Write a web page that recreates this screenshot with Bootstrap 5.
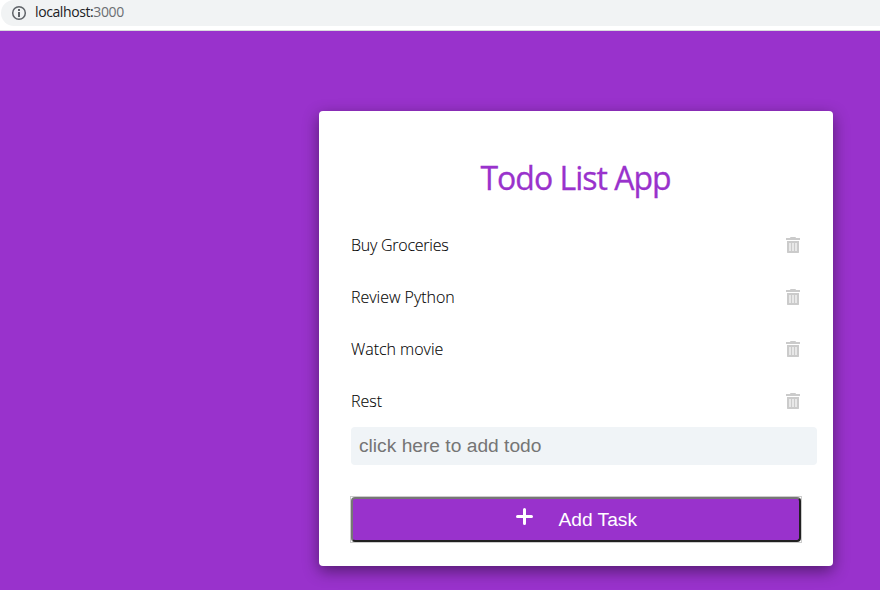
<!DOCTYPE html>
<html lang="en">
<head>
<meta charset="utf-8">
<title>Todo List App</title>
<link href="https://cdn.jsdelivr.net/npm/bootstrap@5.3.0/dist/css/bootstrap.min.css" rel="stylesheet">
<script src="https://cdn.jsdelivr.net/npm/bootstrap@5.3.0/dist/js/bootstrap.bundle.min.js" defer></script>
<style>
body{background:#9932cc;font-family:"Open Sans",sans-serif;height:590px;overflow:hidden}
.address-bar{height:31px;border-bottom:1px solid #d9dbdd;padding-left:1px}
.address-pill{height:26px;background:#f1f3f4;border-radius:13px 0 0 13px;padding:0 0 2px 10px;font-size:14px;line-height:24px;color:#202124}
.address-pill svg{margin-top:1px}
.address-pill span{letter-spacing:-.4px;margin-left:8px}
.address-pill .port{color:#6b6e72;margin-left:0}
.todo-card{width:514px;height:455px;margin:80px 0 0 319px;border-radius:4px;padding:45px 32px 24px;box-shadow:0 5px 16px rgba(0,0,0,.46)}
.todo-title{font-size:32px;line-height:44px;margin:0 0 19px -1px;color:#9932cc;letter-spacing:-1px;-webkit-text-stroke:.3px #9932cc}
.todo-row{height:52px;font-size:16px;font-weight:300;color:#000;letter-spacing:-.03px;padding-right:1px;-webkit-text-stroke:.1px #000}
.todo-row:nth-of-type(1){letter-spacing:-.25px}
.todo-input{width:466px;height:38px;border:0;border-radius:4px;background:#f0f4f7;padding:0 8px;font:19.2px "Liberation Sans",sans-serif}
.todo-input::placeholder{color:#757575;opacity:1}
.btn-frame{width:452px;margin:31px 0 0 -1px;border:1px solid #ccc}
.add-btn{width:450px;height:45px;border:2px solid;border-color:#767676 #212121 #212121 #767676;border-radius:4px;background:#9932cc;color:#fff;font:19.2px "Liberation Sans",sans-serif;padding:0 0 0 1.5px}
.add-btn svg{margin:0 25px 6px 0}
</style>
</head>
<body>
<header class="address-bar bg-white">
<div class="address-pill d-flex align-items-center">
<svg width="16" height="16" viewBox="0 0 16 16"><circle cx="8" cy="8" r="6.3" fill="none" stroke="#5f6368" stroke-width="1.5"/><path d="M7 4h2v2H7zM7 7h2v5H7z" fill="#5f6368"/></svg>
<span>localhost:<span class="port">3000</span></span>
</div>
</header>
<svg class="d-none"><symbol id="trash" viewBox="0 0 14 16"><path fill="#cbcbcb" d="M4.5 0h5l.5 1h4v2H0V1h4zM1 4h12v11.5l-.5.5h-11l-.5-.5z"/><path fill="#e8e8e8" d="M3 6h2v8H3zM6 6h2v8H6zM9 6h2v8H9z"/></symbol></svg>
<main class="todo-card bg-white">
<h1 class="todo-title text-center fw-normal">Todo List App</h1>
<div class="todo-row d-flex justify-content-between align-items-center"><span>Buy Groceries</span><svg width="14" height="16"><use href="#trash"/></svg></div>
<div class="todo-row d-flex justify-content-between align-items-center"><span>Review Python</span><svg width="14" height="16"><use href="#trash"/></svg></div>
<div class="todo-row d-flex justify-content-between align-items-center"><span>Watch movie</span><svg width="14" height="16"><use href="#trash"/></svg></div>
<div class="todo-row d-flex justify-content-between align-items-center"><span>Rest</span><svg width="14" height="16"><use href="#trash"/></svg></div>
<input class="todo-input d-block" type="text" placeholder="click here to add todo">
<div class="btn-frame"><button class="add-btn d-flex align-items-center justify-content-center"><svg width="17" height="17" viewBox="0 0 17 17"><path d="M8.5 1.5v14M1.5 8.5h14" stroke="#fff" stroke-width="3" stroke-linecap="round"/></svg><span>Add Task</span></button></div>
</main>
</body>
</html>
